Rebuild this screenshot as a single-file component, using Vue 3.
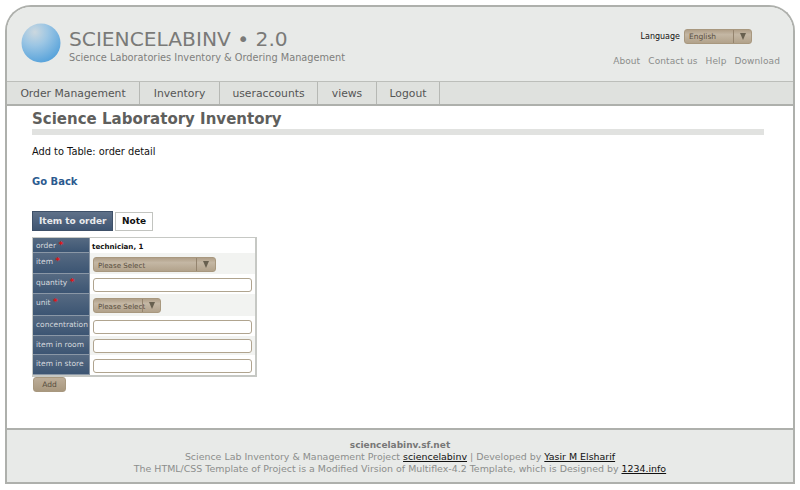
<script setup>
const navItems = ['Order Management', 'Inventory', 'useraccounts', 'views', 'Logout']
const links = ['About', 'Contact us', 'Help', 'Download']
</script>

<template>
  <div class="page">
    <header class="header">
      <div class="brand">
        <svg class="globe" width="40" height="40" viewBox="0 0 40 40">
          <defs>
            <radialGradient id="g" cx="0.34" cy="0.22" r="0.85">
              <stop offset="0" stop-color="#ccd8df" />
              <stop offset="0.4" stop-color="#9cc6e4" />
              <stop offset="1" stop-color="#52a0da" />
            </radialGradient>
          </defs>
          <circle cx="20" cy="20" r="19.5" fill="url(#g)" />
        </svg>
        <div class="titles">
          <div class="title">SCIENCELABINV • 2.0</div>
          <div class="subtitle">Science Laboratories Inventory &amp; Ordering Management</div>
        </div>
      </div>
      <div class="tools">
        <div class="lang">
          <span>Language</span>
          <div class="select lang-select">
            <span class="sel-text">English</span>
            <span class="sel-arrow"><i class="tri"></i></span>
          </div>
        </div>
        <nav class="toplinks">
          <a v-for="l in links" :key="l">{{ l }}</a>
        </nav>
      </div>
    </header>

    <nav class="menu">
      <a v-for="n in navItems" :key="n" class="menu-item">{{ n }}</a>
    </nav>

    <main class="main">
      <h1 class="h1">Science Laboratory Inventory</h1>
      <p class="caption">Add to Table: order detail</p>
      <a class="back">Go Back</a>

      <div class="tabs">
        <span class="tab active">Item to order</span>
        <span class="tab">Note</span>
      </div>

      <div class="form">
        <div class="row r-order">
          <div class="label">order <b>*</b></div>
          <div class="val plain">technician, 1</div>
        </div>
        <div class="row alt r-item">
          <div class="label">item <b>*</b></div>
          <div class="val">
            <div class="select item-select">
              <span class="sel-text">Please Select</span>
              <span class="sel-arrow"><i class="tri"></i></span>
            </div>
          </div>
        </div>
        <div class="row r-in">
          <div class="label">quantity <b>*</b></div>
          <div class="val"><div class="input"></div></div>
        </div>
        <div class="row alt r-unit">
          <div class="label">unit <b>*</b></div>
          <div class="val">
            <div class="select unit-select">
              <span class="sel-text">Please Select</span>
              <span class="sel-arrow"><i class="tri"></i></span>
            </div>
          </div>
        </div>
        <div class="row r-in">
          <div class="label">concentration</div>
          <div class="val"><div class="input"></div></div>
        </div>
        <div class="row alt r-room">
          <div class="label">item in room</div>
          <div class="val"><div class="input"></div></div>
        </div>
        <div class="row r-in">
          <div class="label">item in store</div>
          <div class="val"><div class="input"></div></div>
        </div>
      </div>
      <div class="add">Add</div>
    </main>

    <footer class="footer">
      <div class="f-strong">sciencelabinv.sf.net</div>
      <div>Science Lab Inventory &amp; Management Project <a>sciencelabinv</a> | Developed by <a>Yasir M Elsharif</a></div>
      <div>The HTML/CSS Template of Project is a Modified Virsion of Multiflex-4.2 Template, which is Designed by <a>1234.info</a></div>
    </footer>
  </div>
</template>

<style>
html, body { margin: 0; background: #fff; }
</style>

<style scoped>
.page {
  box-sizing: border-box;
  width: 790px;
  height: 479px;
  margin: 5px 5px 0;
  border: 2px solid #aeb0ac;
  border-bottom: 0;
  border-radius: 26px 26px 0 0;
  background: #fff;
  font-family: "DejaVu Sans", Verdana, sans-serif;
  display: flex;
  flex-direction: column;
  overflow: hidden;
}
.header {
  height: 75px;
  flex: none;
  box-sizing: border-box;
  background: #e8eae8;
  display: flex;
  justify-content: space-between;
  border-bottom: 1px solid #bcbeba;
}
.brand { display: flex; padding: 16px 0 0 14px; }
.globe { display: block; }
.titles { margin-left: 8px; padding-top: 3px; }
.title { font-size: 20.2px; line-height: 26px; color: #7a7a78; }
.subtitle { font-size: 9.77px; line-height: 12px; color: #7f7f7d; }
.tools {
  display: flex;
  flex-direction: column;
  align-items: flex-end;
  padding: 22px 13px 0 0;
}
.lang {
  display: flex;
  align-items: center;
  gap: 4px;
  font-size: 8px;
  color: #111;
  margin-right: 28px;
}
.select {
  box-sizing: border-box;
  display: flex;
  height: 15px;
  border-radius: 3px;
  border: 1px solid #a8987f;
  background: linear-gradient(#b09f88, #c4b7a4 35%, #b2a28b);
  color: #5a4f3f;
  font-size: 7.5px;
  line-height: 14px;
}
.sel-text { flex: 1; min-width: 0; padding-left: 4px; white-space: nowrap; }
.sel-arrow {
  width: 17px;
  flex: none;
  display: flex;
  align-items: center;
  justify-content: center;
  border-left: 1px solid #94846e;
}
.tri {
  width: 0;
  height: 0;
  border-left: 3.5px solid transparent;
  border-right: 3.5px solid transparent;
  border-top: 7px solid #68604f;
}
.lang-select { width: 68px; }
.toplinks {
  display: flex;
  gap: 8px;
  margin-top: 11px;
  font-size: 9px;
  line-height: 12px;
  color: #8b8d8b;
  letter-spacing: 0.1px;
}
.menu {
  display: flex;
  height: 24px;
  flex: none;
  box-sizing: border-box;
  background: #dfe1de;
  border-bottom: 2px solid #aeb0ac;
}
.menu-item {
  box-sizing: border-box;
  padding-top: 1px;
  font-size: 10.8px;
  line-height: 22px;
  color: #555;
  text-align: center;
  border-right: 1px solid #b6b8b4;
}
.menu-item:nth-child(1) { width: 133px; }
.menu-item:nth-child(2) { width: 80px; }
.menu-item:nth-child(3) { width: 98px; }
.menu-item:nth-child(4) { width: 59px; }
.menu-item:nth-child(5) { width: 63px; }
.main { flex: 1; padding: 0 29px 0 25px; min-height: 0; }
.h1 {
  box-sizing: content-box;
  margin: 0;
  height: 22px;
  padding-top: 1px;
  font-size: 15px;
  line-height: 24px;
  font-weight: bold;
  color: #5f5f5d;
  border-bottom: 6px solid #e1e2e0;
}
.caption { margin: 10px 0 0; font-size: 9.8px; line-height: 13px; color: #111; }
.back {
  display: block;
  margin-top: 17px;
  font-size: 10px;
  line-height: 13px;
  font-weight: bold;
  color: #2c5a8f;
}
.tabs { display: flex; gap: 1px; margin-top: 23px; align-items: flex-start; }
.tab {
  box-sizing: border-box;
  height: 19px;
  margin-top: 1px;
  margin-left: 1px;
  padding: 0 6px;
  font-size: 9px;
  line-height: 17px;
  font-weight: bold;
  color: #111;
  background: #fff;
  border: 1px solid #c2c4c0;
}
.tab.active {
  height: 20px;
  width: 81px;
  margin-top: 0;
  margin-left: 0;
  padding: 0 6px;
  line-height: 18px;
  color: #e8eaec;
  background: linear-gradient(#5f7189, #3f5572);
  border-color: #3e5068;
  white-space: nowrap;
}
.form {
  box-sizing: border-box;
  width: 225px;
  margin-top: 6px;
  border: 1px solid #c6c8c4;
  border-width: 1px 2px 2px 1px;
  background: #fff;
}
.row { display: flex; }
.row.alt { background: #f2f3f1; }
.r-order { height: 15px; }
.r-item { height: 21px; }
.r-in { height: 20px; }
.r-unit { height: 22px; }
.r-room { height: 19px; }
.label {
  box-sizing: border-box;
  width: 57px;
  flex: none;
  padding: 0 0 0 3px;
  font-size: 7.5px;
  line-height: 18px;
  color: #d5d9de;
  background: linear-gradient(#566a82, #3c5573);
  border-bottom: 1px solid #8a97a6;
  border-right: 1px solid #8a97a6;
  white-space: nowrap;
}
.r-order .label { line-height: 16px; }
.label b { color: #e01414; font-size: 9px; font-weight: bold; line-height: 1; }
.val { flex: 1; padding: 4px 3px 0 3px; min-width: 0; }
.val.plain {
  padding: 3px 0 0 2px;
  font-size: 7.1px;
  line-height: 12px;
  font-weight: bold;
  color: #111;
}
.input {
  box-sizing: border-box;
  height: 14px;
  background: #fff;
  border: 1px solid #b0a48f;
  border-radius: 3px;
}
.r-room .val { padding-top: 3px; }
.item-select { width: 123px; font-size: 7.1px; line-height: 15px; }
.unit-select { width: 68px; font-size: 7.1px; line-height: 15px; }
.item-select .sel-arrow { width: 18px; }
.add {
  box-sizing: border-box;
  width: 33px;
  height: 15px;
  margin: 0 0 0 1px;
  border-radius: 3px;
  border: 1px solid #a8987f;
  background: linear-gradient(#bcad98, #a9987f);
  color: #554c3e;
  font-size: 7.5px;
  line-height: 14px;
  text-align: center;
}
.footer {
  box-sizing: border-box;
  height: 56px;
  flex: none;
  background: #e8eae8;
  border-top: 2px solid #aeb0ac;
  border-bottom: 2px solid #aeb0ac;
  padding-top: 9px;
  font-size: 9.43px;
  line-height: 12px;
  text-align: center;
  color: #8c8e8c;
}
.f-strong { font-size: 9px; font-weight: bold; color: #777; }
.footer a { color: #111; text-decoration: underline; }
</style>
